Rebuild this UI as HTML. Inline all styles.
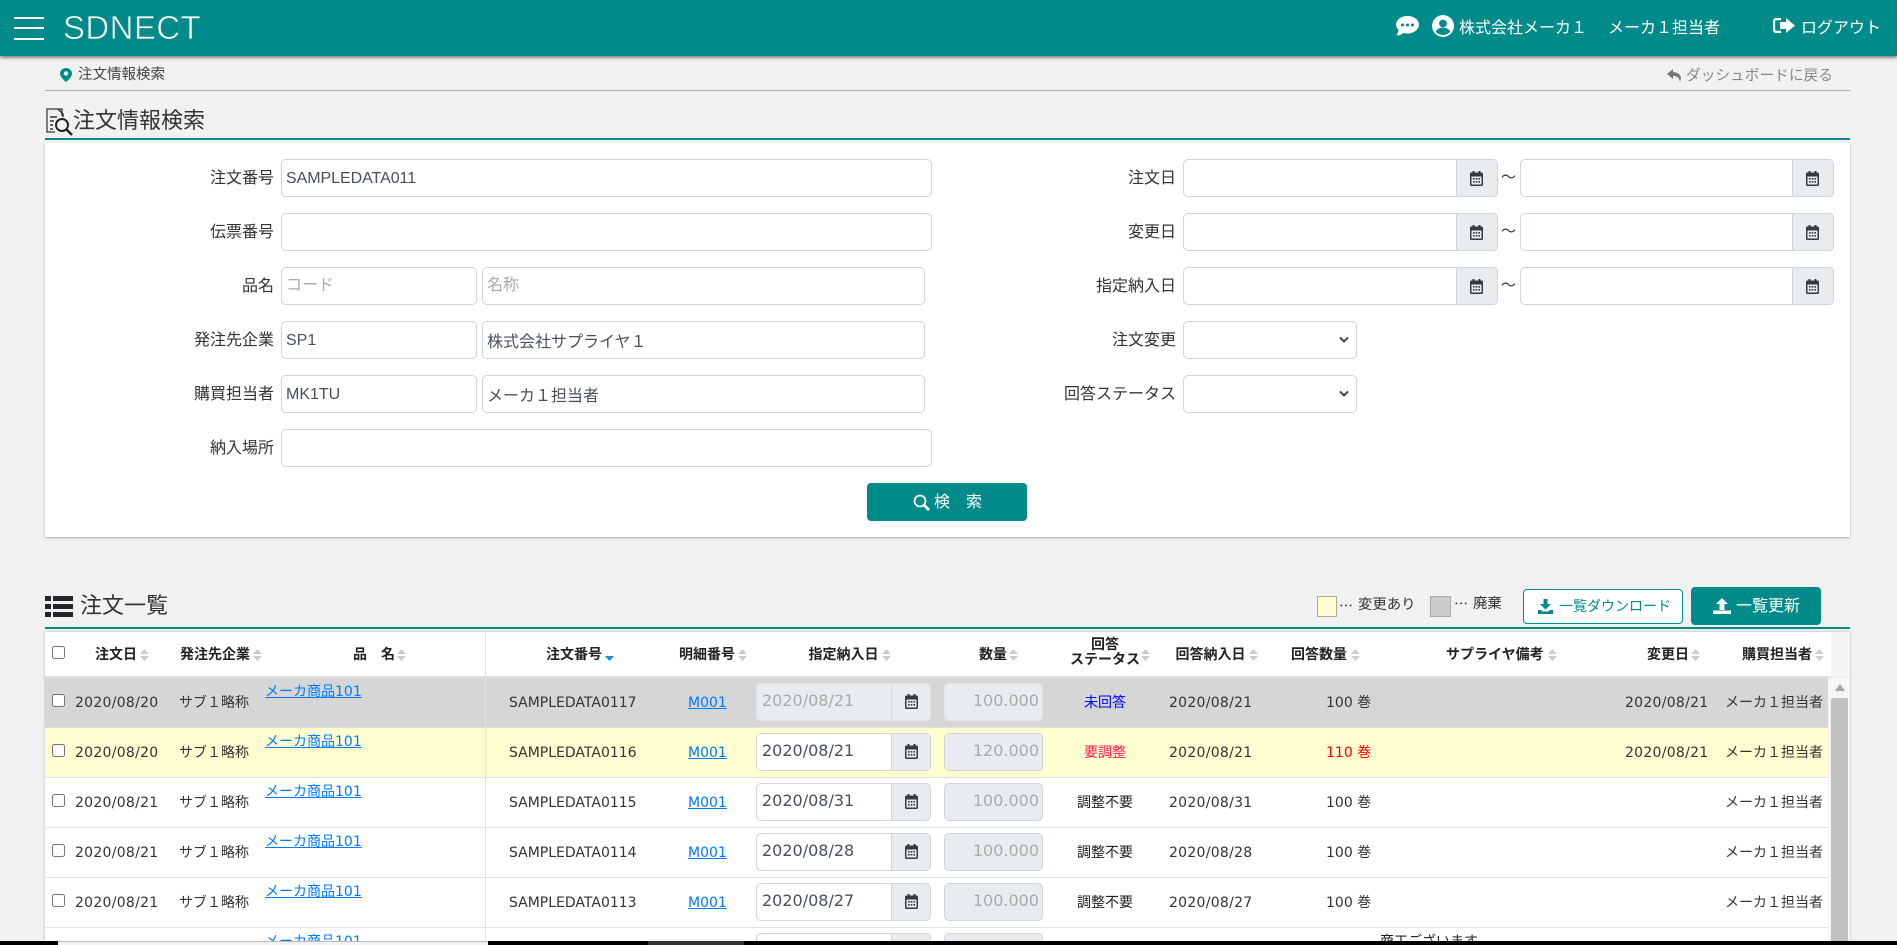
<!DOCTYPE html>
<html lang="ja"><head><meta charset="utf-8"><title>注文情報検索</title>
<style>
*{box-sizing:border-box}
html,body{margin:0;padding:0;width:1897px;height:945px;overflow:hidden;background:#f1f1f1}
body{position:relative;font-family:"DejaVu Sans","Noto Sans CJK JP",sans-serif;color:#333;font-size:14px}
.a{position:absolute;white-space:nowrap}
#hd{position:absolute;left:0;top:0;width:1897px;height:56px;background:#008b8a;box-shadow:0 2px 3px rgba(0,0,0,.45)}
.bar{position:absolute;left:14px;width:30px;height:2px;background:#fff}
.w{color:#fff;font-size:16px;line-height:24px;top:16px}
.title{font-size:22px;line-height:30px;color:#333}
.teal{position:absolute;left:45px;width:1805px;height:2px;background:#008b8a}
#panel{position:absolute;left:45px;top:143px;width:1805px;height:394px;background:#fff;box-shadow:0 1px 2px rgba(0,0,0,.3)}
.lb{position:absolute;text-align:right;font-size:16px;line-height:24px;color:#333;white-space:nowrap}
input.f,.sel{position:absolute;height:38px;border:1px solid #ced4da;border-radius:5px;background:#fff;font:16px "Liberation Sans","Noto Sans CJK JP",sans-serif;color:#495057;padding:0 4px;outline:0;margin:0}
input.lt{padding-top:1px}
input.f::placeholder{color:#aaa;opacity:1}
.ad{position:absolute;height:38px;width:42px;background:#e9ecef;border:1px solid #ced4da;border-radius:0 5px 5px 0}
.ad svg{position:absolute;left:13px;top:10px}
.tl{position:absolute;font-size:15px;line-height:20px}
#tb{position:absolute;left:45px;top:632px;width:1805px;height:309px;background:#fff;overflow:hidden;box-shadow:0 0 2px rgba(0,0,0,.3)}
.th{position:absolute;top:13px;font-size:14px;font-weight:700;line-height:20px;color:#222;white-space:nowrap}
.s{position:absolute;top:17px;width:9px;height:12px}
.r{position:absolute;left:0;width:1783px;height:50px;border-bottom:1px solid #dee2e6;background:#fff}
.r>span,.r>a{position:absolute;top:15px;line-height:20px;white-space:nowrap;color:#333;font-size:14px}
.cb{position:absolute;left:7px;top:16px;width:13px;height:13px;border:1px solid #767676;border-radius:2.5px;background:#fff}
.r>a{color:#007bff;text-decoration:underline}
.r>a.l{left:220px;top:4px}
.r>a.m{left:643px}
.d1{left:30px;letter-spacing:.28px}
.su{left:134px}
.so{left:464px}
.st{left:1010px;width:100px;text-align:center}
.rd{left:1124px;letter-spacing:.28px}
.q{left:1281px}
.cd{left:1580px;letter-spacing:.28px}
.tn{left:1680px}
.di{position:absolute;left:711px;top:5px;width:175px;height:38px;border:1px solid #ced4da;border-radius:5px;background:#fff;font-size:16px;line-height:34px;padding-left:5px;color:#495057;overflow:hidden}
.di i{position:absolute;left:134px;top:0;width:40px;height:36px;background:#e9ecef;border-left:1px solid #ced4da}
.di svg{position:absolute;left:13px;top:10px}
.qi{position:absolute;left:899px;top:5px;width:99px;height:38px;border:1px solid #ced4da;border-radius:5px;background:#e9ecef;font-size:16px;line-height:34px;text-align:right;padding-right:3px;color:#aaa}
.g .di{color:#aaa;background:#e9ecef;border-color:#e2e5e8}
.g .qi{border-color:#e2e5e8}
.g .di i{border-left-color:#d6d8db}
.g{background:#d6d6d6}.y{background:#fffdd0}
.cj{font-family:"Noto Sans CJK JP",sans-serif}
</style></head><body>
<svg width="0" height="0" style="position:absolute">
<symbol id="cal" viewBox="0 0 13 15"><rect x="2.5" y="0" width="2" height="3" fill="#343a40"/><rect x="8.5" y="0" width="2" height="3" fill="#343a40"/><rect x="0" y="1.5" width="13" height="13.5" rx="1.5" fill="#343a40"/><rect x="1.5" y="5.5" width="10" height="8" fill="#e9ecef"/><g fill="#343a40"><rect x="3" y="7" width="1.6" height="1.6"/><rect x="5.7" y="7" width="1.6" height="1.6"/><rect x="8.4" y="7" width="1.6" height="1.6"/><rect x="3" y="10" width="1.6" height="1.6"/><rect x="5.7" y="10" width="1.6" height="1.6"/><rect x="8.4" y="10" width="1.6" height="1.6"/></g></symbol>
<symbol id="so" viewBox="0 0 9 12"><path d="M4.5 0L9 5H0z M0 7h9L4.5 12z" fill="#ccc"/></symbol>
</svg>

<div id="hd">
<div class="bar" style="top:17px"></div><div class="bar" style="top:27px"></div><div class="bar" style="top:38px"></div>
<div class="a" style="left:63px;top:9px;font:33px/38px 'Liberation Sans',sans-serif;color:#fff;letter-spacing:.4px;-webkit-text-stroke:.7px #008b8a">SDNECT</div>
<svg class="a" style="left:1396px;top:16px" width="23" height="20" viewBox="0 0 23 20"><path d="M11.5 0C5.1 0 0 3.8 0 8.5c0 2 1 3.900 2.600 5.300C2.300 16 1 18.400 .6 19.500c2.900 0 5.600-1.300 7-2.500 1.200.3 2.500.5 3.900.5C17.900 17.500 23 13.200 23 8.500S17.900 0 11.500 0z" fill="#fff"/><circle cx="6.500" cy="9" r="1.500" fill="#008b8a"/><circle cx="11.500" cy="9" r="1.500" fill="#008b8a"/><circle cx="16.500" cy="9" r="1.500" fill="#008b8a"/></svg>
<svg class="a" style="left:1432px;top:15px" width="22" height="22" viewBox="0 0 22 22"><circle cx="11" cy="11" r="11" fill="#fff"/><circle cx="11" cy="8.500" r="3.900" fill="#008b8a"/><path d="M3.800 16.800c1-2.800 3.700-4 7.200-4s6.200 1.200 7.200 4c-1.800 2-4.300 3.200-7.200 3.200s-5.400-1.200-7.200-3.200z" fill="#008b8a"/></svg>
<div class="a w" style="left:1459px">株式会社メーカ１</div>
<div class="a w" style="left:1608px">メーカ１担当者</div>
<svg class="a" style="left:1773px;top:18px" width="22" height="15" viewBox="0 0 22 15"><path d="M7 1H3.500C2 1 1 2 1 3.500v8C1 13 2 14 3.500 14H7" fill="none" stroke="#fff" stroke-width="2.400" stroke-linecap="round"/><path d="M13 0l9 7.500-9 7.500v-4H7V4h6z" fill="#fff"/></svg>
<div class="a w" style="left:1801px">ログアウト</div>
</div>

<svg class="a" style="left:60px;top:68px" width="12" height="14" viewBox="0 0 12 14"><path d="M6 0C2.700 0 0 2.500 0 5.600 0 8.500 3.700 12.300 6 14c2.300-1.700 6-5.500 6-8.400C12 2.500 9.300 0 6 0z" fill="#008b8a"/><circle cx="6" cy="5.500" r="2.200" fill="#f1f1f1"/></svg>
<div class="a" style="left:78px;top:65px;font-size:14.500px;line-height:20px;color:#444">注文情報検索</div>
<svg class="a" style="left:1667px;top:69px" width="15" height="13" viewBox="0 0 15 13"><path d="M6 0L0 5l6 5V7c4 0 6 1 7 6 2-5 1-9-7-10z" fill="#777"/></svg>
<div class="a" style="left:1686px;top:66px;font-size:14.700px;line-height:20px;color:#888">ダッシュボードに戻る</div>
<div class="a" style="left:45px;top:90px;width:1805px;height:1px;background:#aaa"></div>

<svg class="a" style="left:46px;top:108px" width="27" height="28" viewBox="0 0 27 28"><path d="M16 8V1H1v23h8" fill="none" stroke="#555" stroke-width="1.500"/><path d="M12 1l5 5v3" fill="none" stroke="#333" stroke-width="1.500"/><path d="M4 9h7M4 13h4M4 17h3M4 21h3" stroke="#333" stroke-width="1.500"/><circle cx="16" cy="17" r="6" fill="none" stroke="#222" stroke-width="2"/><path d="M20.500 21.500L26 27" stroke="#222" stroke-width="2.400"/></svg>
<div class="a title" style="left:73px;top:107px">注文情報検索</div>
<div class="teal" style="top:138px"></div>

<div id="panel"></div>
<div class="lb" style="right:1623px;top:166px">注文番号</div>
<input class="f lt" style="left:281px;top:159px;width:651px;letter-spacing:-.05px" value="SAMPLEDATA011">
<div class="lb" style="right:1623px;top:220px">伝票番号</div>
<input class="f" style="left:281px;top:213px;width:651px">
<div class="lb" style="right:1623px;top:274px">品名</div>
<input class="f" style="left:281px;top:267px;width:196px" placeholder="コード">
<input class="f" style="left:482px;top:267px;width:443px" placeholder="名称">
<div class="lb" style="right:1623px;top:328px">発注先企業</div>
<input class="f lt" style="left:281px;top:321px;width:196px" value="SP1">
<input class="f" style="left:482px;top:321px;width:443px" value="株式会社サプライヤ１">
<div class="lb" style="right:1623px;top:382px">購買担当者</div>
<input class="f lt" style="left:281px;top:375px;width:196px" value="MK1TU">
<input class="f" style="left:482px;top:375px;width:443px" value="メーカ１担当者">
<div class="lb" style="right:1623px;top:436px">納入場所</div>
<input class="f" style="left:281px;top:429px;width:651px">

<div class="lb" style="right:721px;top:166px">注文日</div>
<input class="f" style="left:1183px;top:159px;width:315px"><div class="ad" style="left:1456px;top:159px"><svg width="13" height="15" style="top:11px"><use href="#cal"/></svg></div>
<div class="tl" style="left:1501px;top:167px">～</div>
<input class="f" style="left:1520px;top:159px;width:314px"><div class="ad" style="left:1792px;top:159px"><svg width="13" height="15" style="top:11px"><use href="#cal"/></svg></div>

<div class="lb" style="right:721px;top:220px">変更日</div>
<input class="f" style="left:1183px;top:213px;width:315px"><div class="ad" style="left:1456px;top:213px"><svg width="13" height="15" style="top:11px"><use href="#cal"/></svg></div>
<div class="tl" style="left:1501px;top:221px">～</div>
<input class="f" style="left:1520px;top:213px;width:314px"><div class="ad" style="left:1792px;top:213px"><svg width="13" height="15" style="top:11px"><use href="#cal"/></svg></div>

<div class="lb" style="right:721px;top:274px">指定納入日</div>
<input class="f" style="left:1183px;top:267px;width:315px"><div class="ad" style="left:1456px;top:267px"><svg width="13" height="15" style="top:11px"><use href="#cal"/></svg></div>
<div class="tl" style="left:1501px;top:275px">～</div>
<input class="f" style="left:1520px;top:267px;width:314px"><div class="ad" style="left:1792px;top:267px"><svg width="13" height="15" style="top:11px"><use href="#cal"/></svg></div>

<div class="lb" style="right:721px;top:328px">注文変更</div>
<div class="sel" style="left:1183px;top:321px;width:174px"></div>
<svg class="a" style="left:1339px;top:336px" width="10" height="8" viewBox="0 0 10 8"><path d="M1 1.500l4 4 4-4" fill="none" stroke="#444" stroke-width="2"/></svg>
<div class="lb" style="right:721px;top:382px">回答ステータス</div>
<div class="sel" style="left:1183px;top:375px;width:174px"></div>
<svg class="a" style="left:1339px;top:390px" width="10" height="8" viewBox="0 0 10 8"><path d="M1 1.500l4 4 4-4" fill="none" stroke="#444" stroke-width="2"/></svg>

<div class="a" style="left:867px;top:483px;width:160px;height:38px;background:#008b8a;border-radius:4px"></div>
<svg class="a" style="left:913px;top:494px" width="17" height="17" viewBox="0 0 17 17"><circle cx="7" cy="7" r="5.500" fill="none" stroke="#fff" stroke-width="1.800"/><path d="M11 11l5 5" stroke="#fff" stroke-width="2.800"/></svg>
<div class="a" style="left:934px;top:490px;font-size:16px;line-height:24px;color:#fff">検　索</div>

<svg class="a" style="left:45px;top:596px" width="28" height="21" viewBox="0 0 28 21"><g fill="#23272b"><rect x="0" y="0" width="6" height="5"/><rect x="8" y="0" width="20" height="5"/><rect x="0" y="8" width="6" height="5"/><rect x="8" y="8" width="20" height="5"/><rect x="0" y="16" width="6" height="5"/><rect x="8" y="16" width="20" height="5"/></g></svg>
<div class="a title" style="left:80px;top:592px">注文一覧</div>

<div class="a" style="left:1317px;top:596px;width:20px;height:21px;background:#fffdd0;border:1px solid #aaa"></div>
<div class="a cj" style="left:1339px;top:596px;font-size:14px;line-height:20px;color:#333">…</div>
<div class="a" style="left:1358px;top:595px;font-size:14.400px;line-height:20px;color:#333">変更あり</div>
<div class="a" style="left:1430px;top:596px;width:21px;height:21px;background:#ccc;border:1px solid #aaa"></div>
<div class="a cj" style="left:1454px;top:594px;font-size:14px;line-height:20px;color:#333">…</div>
<div class="a" style="left:1473px;top:594px;font-size:14.400px;line-height:20px;color:#333">廃棄</div>
<div class="a" style="left:1523px;top:589px;width:160px;height:35px;background:#fff;border:1px solid #008b8a;border-radius:4px"></div>
<svg class="a" style="left:1538px;top:599px" width="15" height="15" viewBox="0 0 15 15"><path d="M5.500 0h4v5H13L7.500 10.500 2 5h3.500z" fill="#008b8a"/><path d="M0 11h3l2 1.500h5L12 11h3v4H0z" fill="#008b8a"/></svg>
<div class="a" style="left:1559px;top:597px;font-size:14px;line-height:20px;color:#008b8a">一覧ダウンロード</div>
<div class="a" style="left:1691px;top:587px;width:130px;height:38px;background:#008b8a;border-radius:4px"></div>
<svg class="a" style="left:1713px;top:598px" width="18" height="16" viewBox="0 0 18 16"><path d="M9 0l6 6h-3.500v6h-5V6H3z" fill="#fff"/><path d="M0 12.500h18V16H0z" fill="#fff"/></svg>
<div class="a" style="left:1736px;top:594px;font-size:16px;line-height:24px;color:#fff">一覧更新</div>
<div class="teal" style="top:627px"></div>

<div id="tb">
<div style="position:absolute;left:0;top:0;width:1786px;height:46px;background:#fff;border-bottom:2px solid #dee2e6"></div>
<div style="position:absolute;left:1786px;top:0;width:19px;height:46px;background:#f5f5f5;border-bottom:2px solid #eee"></div>
<div class="cb" style="top:14px"></div>
<div class="th" style="left:50px">注文日</div><svg class="s" style="left:95px"><use href="#so"/></svg>
<div class="th" style="left:135px">発注先企業</div><svg class="s" style="left:208px"><use href="#so"/></svg>
<div class="th" style="left:308px">品　名</div><svg class="s" style="left:352px"><use href="#so"/></svg>
<div class="th" style="left:501px">注文番号</div><svg class="s" style="left:559.500px" viewBox="0 0 9 12"><path d="M0 7h9L4.500 12z" fill="#1e88e5"/></svg>
<div class="th" style="left:634px">明細番号</div><svg class="s" style="left:693px"><use href="#so"/></svg>
<div class="th" style="left:763.500px">指定納入日</div><svg class="s" style="left:837px"><use href="#so"/></svg>
<div class="th" style="left:934px">数量</div><svg class="s" style="left:964px"><use href="#so"/></svg>
<div class="th" style="left:1025px;top:6px;line-height:15px;width:70px;text-align:center">回答<br>ステータス</div><svg class="s" style="left:1096px"><use href="#so"/></svg>
<div class="th" style="left:1130.500px">回答納入日</div><svg class="s" style="left:1204px"><use href="#so"/></svg>
<div class="th" style="left:1246px">回答数量</div><svg class="s" style="left:1306px"><use href="#so"/></svg>
<div class="th" style="left:1401px">サプライヤ備考</div><svg class="s" style="left:1503px"><use href="#so"/></svg>
<div class="th" style="left:1602px">変更日</div><svg class="s" style="left:1646px"><use href="#so"/></svg>
<div class="th" style="left:1697px">購買担当者</div><svg class="s" style="left:1770px"><use href="#so"/></svg>

<div class="r g" style="top:46px"><div class="cb"></div><span class="d1">2020/08/20</span><span class="su">サブ１略称</span><a class="l">メーカ商品101</a><span class="so">SAMPLEDATA0117</span><a class="m">M001</a><div class="di">2020/08/21<i><svg width="13" height="15"><use href="#cal"/></svg></i></div><div class="qi">100.000</div><span class="st" style="color:#00f">未回答</span><span class="rd">2020/08/21</span><span class="q">100 巻</span><span class="cd">2020/08/21</span><span class="tn">メーカ１担当者</span></div>
<div class="r y" style="top:96px"><div class="cb"></div><span class="d1">2020/08/20</span><span class="su">サブ１略称</span><a class="l">メーカ商品101</a><span class="so">SAMPLEDATA0116</span><a class="m">M001</a><div class="di">2020/08/21<i><svg width="13" height="15"><use href="#cal"/></svg></i></div><div class="qi">120.000</div><span class="st" style="color:#ff2050">要調整</span><span class="rd">2020/08/21</span><span class="q" style="color:#f00">110 巻</span><span class="cd">2020/08/21</span><span class="tn">メーカ１担当者</span></div>
<div class="r" style="top:146px"><div class="cb"></div><span class="d1">2020/08/21</span><span class="su">サブ１略称</span><a class="l">メーカ商品101</a><span class="so">SAMPLEDATA0115</span><a class="m">M001</a><div class="di">2020/08/31<i><svg width="13" height="15"><use href="#cal"/></svg></i></div><div class="qi">100.000</div><span class="st" style="color:#222">調整不要</span><span class="rd">2020/08/31</span><span class="q">100 巻</span><span class="tn">メーカ１担当者</span></div>
<div class="r" style="top:196px"><div class="cb"></div><span class="d1">2020/08/21</span><span class="su">サブ１略称</span><a class="l">メーカ商品101</a><span class="so">SAMPLEDATA0114</span><a class="m">M001</a><div class="di">2020/08/28<i><svg width="13" height="15"><use href="#cal"/></svg></i></div><div class="qi">100.000</div><span class="st" style="color:#222">調整不要</span><span class="rd">2020/08/28</span><span class="q">100 巻</span><span class="tn">メーカ１担当者</span></div>
<div class="r" style="top:246px"><div class="cb"></div><span class="d1">2020/08/21</span><span class="su">サブ１略称</span><a class="l">メーカ商品101</a><span class="so">SAMPLEDATA0113</span><a class="m">M001</a><div class="di">2020/08/27<i><svg width="13" height="15"><use href="#cal"/></svg></i></div><div class="qi">100.000</div><span class="st" style="color:#222">調整不要</span><span class="rd">2020/08/27</span><span class="q">100 巻</span><span class="tn">メーカ１担当者</span></div>
<div class="r" style="top:296px"><a class="l">メーカ商品101</a><div class="di"><i></i></div><div class="qi"></div><span style="left:1335px;top:4px;color:#222">商工ございます</span></div>

<div style="position:absolute;left:440px;top:0;width:1px;height:309px;background:#dee2e6"></div>
<div style="position:absolute;left:1783px;top:46px;width:22px;height:263px;background:#f5f5f5"></div>
<svg style="position:absolute;left:1790px;top:52px" width="10" height="7" viewBox="0 0 10 7"><path d="M5 0l5 7H0z" fill="#a8a8a8"/></svg>
<div style="position:absolute;left:1786px;top:66px;width:17px;height:243px;background:#c1c1c1"></div>
</div>

<div class="a" style="left:0;top:941px;width:1897px;height:4px;background:#000"></div>
<div class="a" style="left:58px;top:941px;width:430px;height:4px;background:#f1f1f1;border-top:1px solid #bbb"></div>
<div class="a" style="left:648px;top:941px;width:96px;height:4px;background:#333"></div>
</body></html>
